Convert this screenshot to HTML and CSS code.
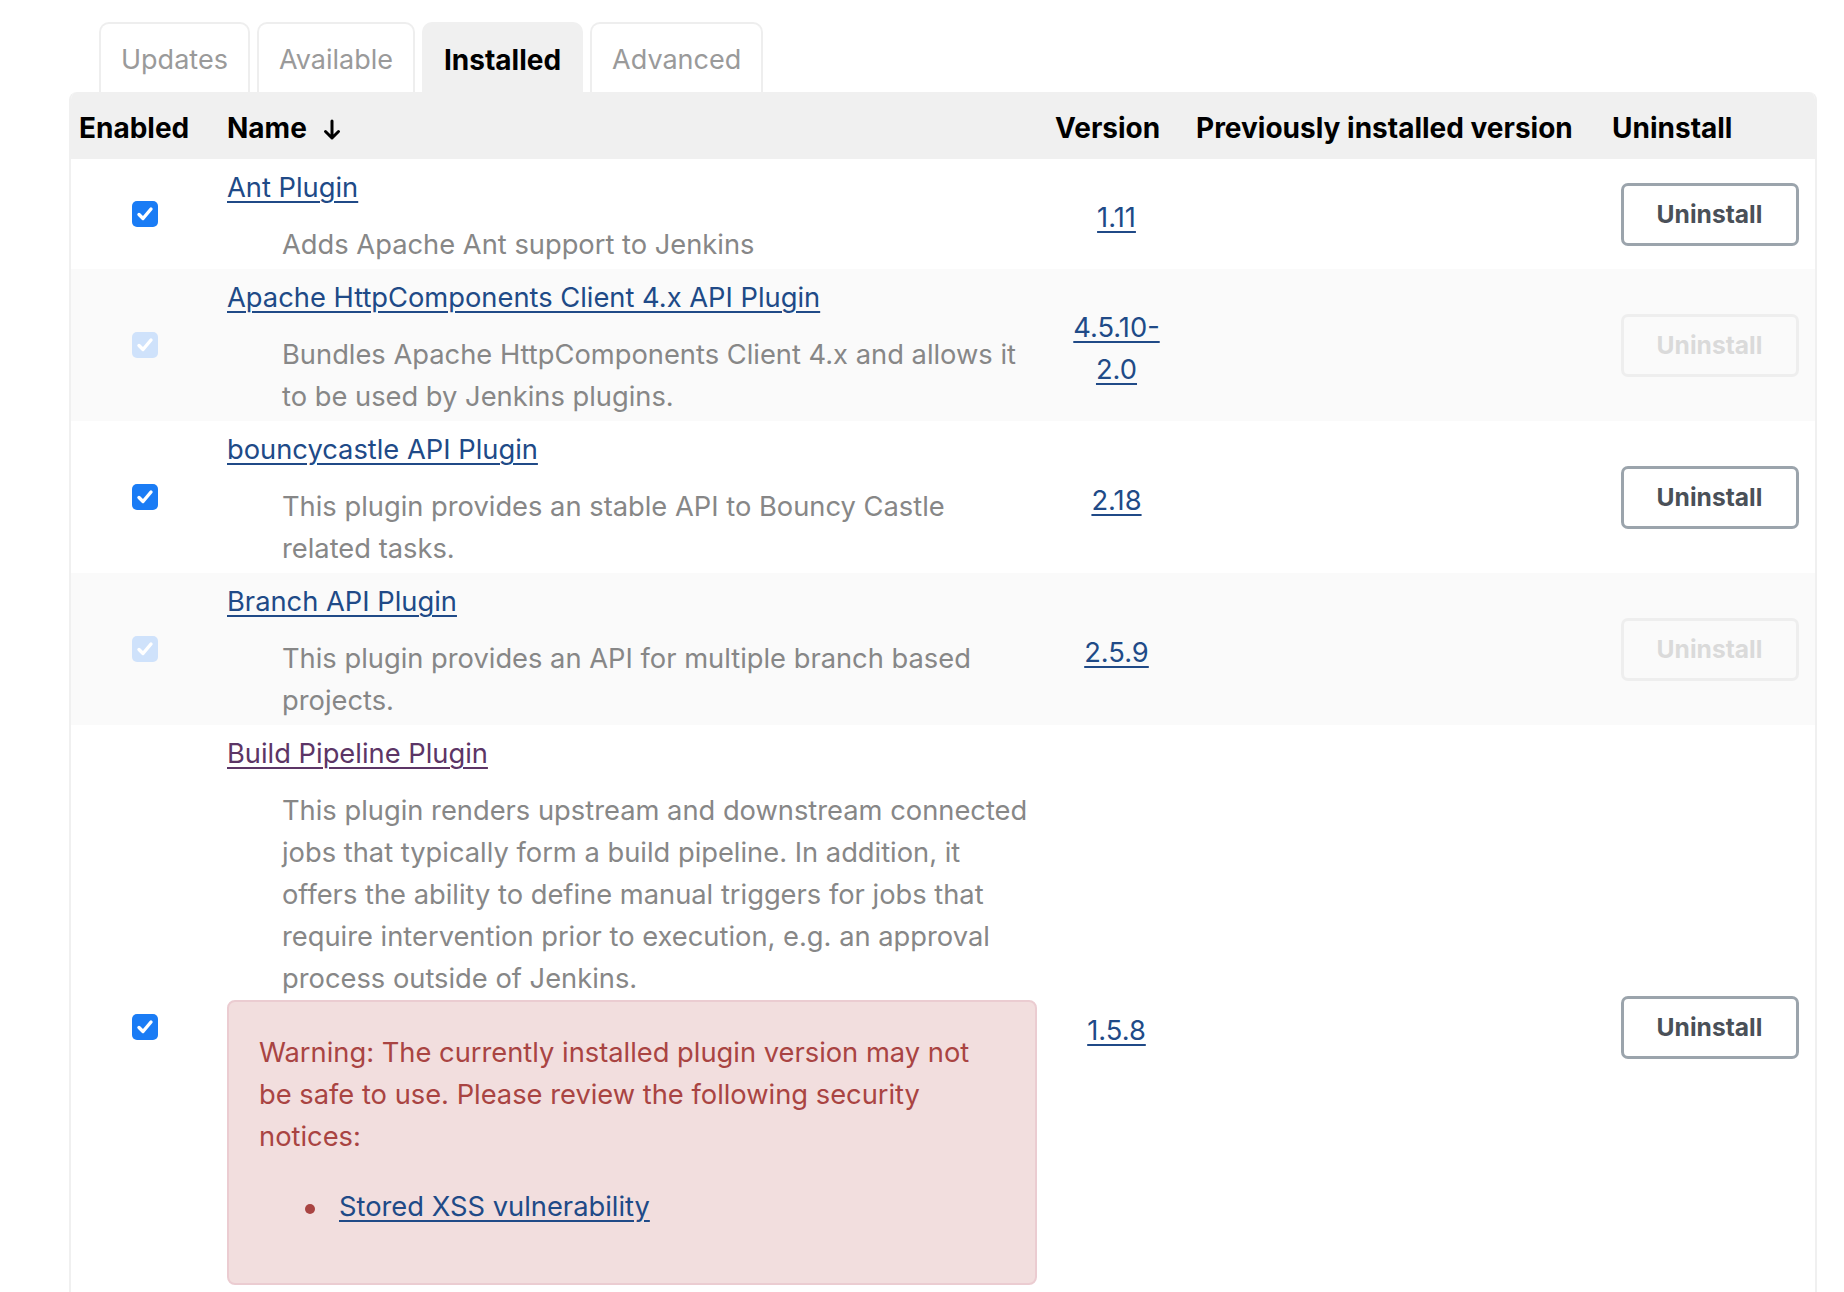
FILE: index.html
```html
<!DOCTYPE html>
<html lang="en">
<head>
<meta charset="utf-8">
<title>Plugin Manager</title>
<link rel="stylesheet" href="styles.css">
</head>
<body>
<div class="page">
  <div class="tabs">
    <a class="tab" href="#">Updates</a>
    <a class="tab" href="#">Available</a>
    <a class="tab active" href="#">Installed</a>
    <a class="tab" href="#">Advanced</a>
  </div>
  <div class="table-wrap">
    <table class="plugins">
      <colgroup>
        <col class="w-enabled">
        <col class="w-name">
        <col class="w-version">
        <col class="w-prev">
        <col class="w-uninstall">
      </colgroup>
      <thead>
        <tr>
          <th class="h-enabled">Enabled</th>
          <th>Name <svg class="sort" width="18" height="22" viewBox="0 0 18 22"><path d="M9 2V19M2.5 12.5L9 19L15.5 12.5" fill="none" stroke="#000" stroke-width="3" stroke-linecap="round" stroke-linejoin="round"/></svg></th>
          <th>Version</th>
          <th>Previously installed version</th>
          <th>Uninstall</th>
        </tr>
      </thead>
      <tbody>
        <tr>
          <td class="enabled"><span class="cb"><svg width="26" height="26" viewBox="0 0 26 26"><path d="M7 13.5L11 17.5L19 8" fill="none" stroke="#fff" stroke-width="3.4" stroke-linecap="round" stroke-linejoin="round"/></svg></span></td>
          <td class="name">
            <div><a class="link" href="#">Ant Plugin</a></div>
            <div class="desc">Adds Apache Ant support to Jenkins</div>
          </td>
          <td class="version"><a class="link" href="#">1.11</a></td>
          <td></td>
          <td class="uninstall"><button class="btn">Uninstall</button></td>
        </tr>
        <tr class="alt">
          <td class="enabled"><span class="cb disabled"><svg width="26" height="26" viewBox="0 0 26 26"><path d="M7 13.5L11 17.5L19 8" fill="none" stroke="#fff" stroke-width="3.4" stroke-linecap="round" stroke-linejoin="round"/></svg></span></td>
          <td class="name">
            <div><a class="link" href="#">Apache HttpComponents Client 4.x API Plugin</a></div>
            <div class="desc">Bundles Apache HttpComponents Client 4.x and allows it to be used by Jenkins plugins.</div>
          </td>
          <td class="version"><a class="link" href="#">4.5.10-2.0</a></td>
          <td></td>
          <td class="uninstall"><button class="btn disabled">Uninstall</button></td>
        </tr>
        <tr>
          <td class="enabled"><span class="cb"><svg width="26" height="26" viewBox="0 0 26 26"><path d="M7 13.5L11 17.5L19 8" fill="none" stroke="#fff" stroke-width="3.4" stroke-linecap="round" stroke-linejoin="round"/></svg></span></td>
          <td class="name">
            <div><a class="link" href="#">bouncycastle API Plugin</a></div>
            <div class="desc">This plugin provides an stable API to Bouncy Castle related tasks.</div>
          </td>
          <td class="version"><a class="link" href="#">2.18</a></td>
          <td></td>
          <td class="uninstall"><button class="btn">Uninstall</button></td>
        </tr>
        <tr class="alt">
          <td class="enabled"><span class="cb disabled"><svg width="26" height="26" viewBox="0 0 26 26"><path d="M7 13.5L11 17.5L19 8" fill="none" stroke="#fff" stroke-width="3.4" stroke-linecap="round" stroke-linejoin="round"/></svg></span></td>
          <td class="name">
            <div><a class="link" href="#">Branch API Plugin</a></div>
            <div class="desc">This plugin provides an API for multiple branch based projects.</div>
          </td>
          <td class="version"><a class="link" href="#">2.5.9</a></td>
          <td></td>
          <td class="uninstall"><button class="btn disabled">Uninstall</button></td>
        </tr>
        <tr>
          <td class="enabled"><span class="cb"><svg width="26" height="26" viewBox="0 0 26 26"><path d="M7 13.5L11 17.5L19 8" fill="none" stroke="#fff" stroke-width="3.4" stroke-linecap="round" stroke-linejoin="round"/></svg></span></td>
          <td class="name">
            <div><a class="link visited" href="#">Build Pipeline Plugin</a></div>
            <div class="desc">This plugin renders upstream and downstream connected jobs that typically form a build pipeline. In addition, it offers the ability to define manual triggers for jobs that require intervention prior to execution, e.g. an approval process outside of Jenkins.</div>
            <div class="warning">
              <p>Warning: The currently installed plugin version may not be safe to use. Please review the following security notices:</p>
              <ul>
                <li><a class="link" href="#">Stored XSS vulnerability</a></li>
              </ul>
            </div>
          </td>
          <td class="version"><a class="link" href="#">1.5.8</a></td>
          <td></td>
          <td class="uninstall"><button class="btn">Uninstall</button></td>
        </tr>
      </tbody>
    </table>
  </div>
</div>
</body>
</html>
```

FILE: styles.css
```css
html, body {
  margin: 0;
  padding: 0;
  background: #ffffff;
}

body {
  font-family: Inter, "Liberation Sans", sans-serif;
  font-size: 27.3px;
  line-height: 42px;
  color: #333333;
}

.page {
  padding: 22px 27px 0 69px;
}

.tabs {
  display: flex;
  gap: 7px;
  margin-left: 30px;
}

.tab {
  box-sizing: border-box;
  height: 70px;
  display: flex;
  align-items: center;
  padding: 4px 20px 0;
  border: 2px solid #eeeeee;
  border-bottom: none;
  border-radius: 10px 10px 0 0;
  font-size: 27px;
  color: #9a9a9a;
  text-decoration: none;
}

.tab.active {
  background: #f0f0f0;
  border-color: #f0f0f0;
  color: #000000;
  font-size: 28px;
  font-weight: 700;
}

.table-wrap {
  border-left: 2px solid #f0f0f0;
  border-right: 2px solid #f0f0f0;
  border-radius: 8px 8px 0 0;
  overflow: hidden;
}

.plugins {
  width: 100%;
  border-collapse: collapse;
  table-layout: fixed;
}

.w-enabled { width: 144px; }
.w-name { width: 828px; }
.w-version { width: 141px; }
.w-prev { width: 416px; }
.w-uninstall { width: 215px; }

.plugins th {
  background: #f0f0f0;
  height: 67px;
  box-sizing: border-box;
  padding: 4px 12px 0;
  text-align: left;
  font-size: 28px;
  font-weight: 700;
  color: #000000;
  white-space: nowrap;
}

.plugins th.h-enabled {
  padding-left: 8px;
}

.sort {
  vertical-align: -3px;
  margin-left: 10px;
}

.plugins td {
  vertical-align: middle;
  padding: 0 12px;
}

.plugins tr.alt td {
  background: #fafafa;
}

.plugins td.enabled {
  padding: 0 0 0 4px;
}

.cb {
  display: block;
  width: 26px;
  height: 26px;
  margin: 0 auto;
  border-radius: 5px;
  background: #1a7cf5;
}

.cb svg {
  display: block;
}

.cb.disabled {
  background: #cfe2fb;
}

.plugins td.name {
  vertical-align: top;
  padding: 8px 6px 3px 12px;
}

.link {
  color: #204a87;
  text-decoration: underline;
  text-decoration-thickness: 2px;
  text-underline-offset: 4px;
}

.link.visited {
  color: #5c3566;
}

.desc {
  margin: 15px 8px 0 55px;
  color: #878787;
}

.plugins td.version {
  text-align: center;
  padding: 7px 6px 0 12px;
}

.plugins td.uninstall {
  text-align: center;
  padding: 0 8px 0 12px;
}

.btn {
  box-sizing: border-box;
  width: 178px;
  height: 63px;
  border: 3px solid #9ba4ac;
  border-radius: 7px;
  background: #ffffff;
  font-family: Inter, "Liberation Sans", sans-serif;
  font-size: 24.6px;
  font-weight: 700;
  color: #4a5058;
  vertical-align: middle;
}

.btn.disabled {
  border-color: #eeeeee;
  background: transparent;
  color: #dadada;
}

.warning {
  background: #f2dede;
  border: 2px solid #ebccd1;
  border-radius: 8px;
  color: #a94442;
  padding: 30px 55px 30px 30px;
  margin: 0 0 41px;
}

.warning p {
  margin: 0;
}

.warning ul {
  margin: 28px 0 25px;
  padding-left: 46px;
  list-style: none;
}

.warning li::before {
  content: "";
  display: inline-block;
  width: 10px;
  height: 10px;
  margin-right: 24px;
  border-radius: 50%;
  background: #a94442;
  vertical-align: middle;
}
```
